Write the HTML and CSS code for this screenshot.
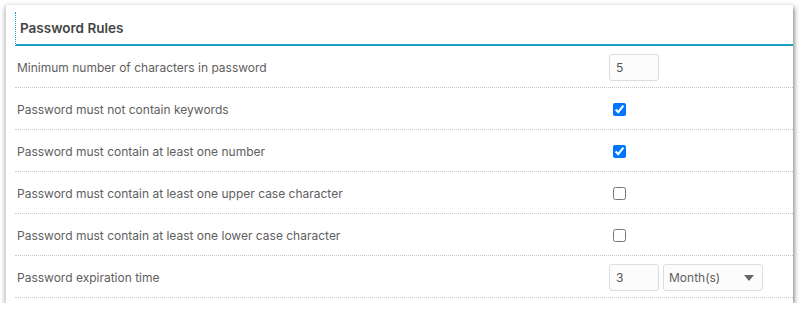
FILE: index.html
```html
<!DOCTYPE html>
<html>
<head>
<meta charset="utf-8">
<link rel="stylesheet" href="styles.css">
</head>
<body>
<div class="card">
  <div class="header"><h2 class="title">Password Rules</h2></div>
  <div class="row">
    <div class="label">Minimum number of characters in password</div>
    <div class="ctrl"><input class="num" type="text" value="5"></div>
  </div>
  <div class="row">
    <div class="label">Password must not contain keywords</div>
    <div class="ctrl"><input class="chk" type="checkbox" checked></div>
  </div>
  <div class="row">
    <div class="label">Password must contain at least one number</div>
    <div class="ctrl"><input class="chk" type="checkbox" checked></div>
  </div>
  <div class="row">
    <div class="label">Password must contain at least one upper case character</div>
    <div class="ctrl"><input class="chk" type="checkbox"></div>
  </div>
  <div class="row">
    <div class="label">Password must contain at least one lower case character</div>
    <div class="ctrl"><input class="chk" type="checkbox"></div>
  </div>
  <div class="row">
    <div class="label">Password expiration time</div>
    <div class="ctrl">
      <input class="num" type="text" value="3">
      <div class="select"><span>Month(s)</span><span class="caret"></span></div>
    </div>
  </div>
</div>
</body>
</html>
```

FILE: styles.css
```css
html, body {
  margin: 0;
  padding: 0;
  background: #ffffff;
}
body {
  font-family: Inter, "Noto Sans", sans-serif;
  color: #555;
}
.card {
  margin: 5px 0 0 5px;
  width: 778px;
  height: 291px;
  padding: 7px 0 0 9px;
  background: #fff;
  box-shadow: 1px 2px 5px rgba(0,0,0,0.55);
  border-left: 1px solid #d8d8d8;
}
.header {
  height: 32px;
  border-left: 1px dotted #1a9fc4;
  border-bottom: 2px solid #1a9fc4;
  display: flex;
  align-items: center;
  padding-left: 4px;
}
.title {
  margin: 0;
  font-size: 13.5px;
  font-weight: 600;
  color: #444;
}
.row {
  box-sizing: border-box;
  height: 42px;
  padding: 2px 0 0 2px;
  border-bottom: 1px dotted #c8c8c8;
  display: flex;
  align-items: center;
}
.label {
  width: 592px;
  font-size: 12px;
  color: #606060;
}
.ctrl {
  display: flex;
  align-items: center;
  gap: 4px;
}
.num {
  box-sizing: border-box;
  width: 50px;
  height: 27px;
  border: 1px solid #ddd;
  border-radius: 3px;
  background: #fcfcfc;
  padding: 0 0 0 6px;
  margin: 0;
  font-family: Inter, sans-serif;
  font-size: 12px;
  color: #555;
  outline: none;
}
.chk {
  width: 13px;
  height: 13px;
  margin: 0 0 0 4px;
}
.select {
  box-sizing: border-box;
  width: 100px;
  height: 27px;
  border: 1px solid #ddd;
  border-radius: 3px;
  background: #fcfcfc;
  display: flex;
  align-items: center;
  justify-content: space-between;
  padding: 0 8px 0 5px;
  font-size: 12px;
  color: #606060;
}
.caret {
  width: 0;
  height: 0;
  border-left: 5px solid transparent;
  border-right: 5px solid transparent;
  border-top: 6px solid #666;
}
```
